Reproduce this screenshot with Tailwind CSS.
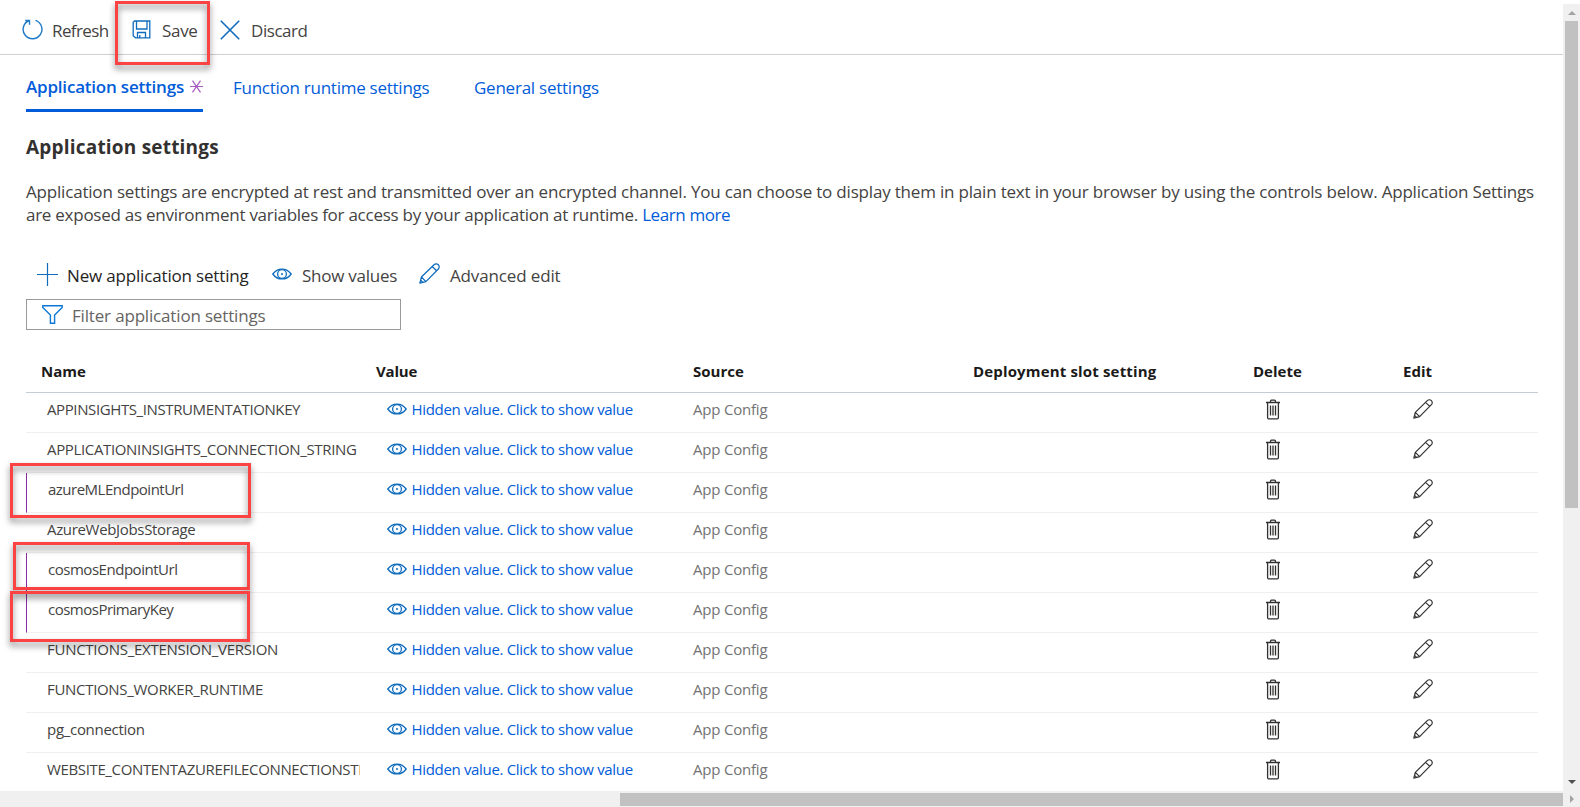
<!DOCTYPE html>
<html lang="en">
<head>
<meta charset="utf-8">
<title>Application settings</title>
<script src="https://cdn.jsdelivr.net/npm/@tailwindcss/browser@4"></script>
</head>
<body class="w-[1580px] h-[807px] overflow-hidden bg-white font-['Open_Sans','Noto_Sans',sans-serif] text-[17px] text-[#444342] tracking-[-0.2px] whitespace-nowrap">

<svg class="hidden">
  <symbol id="eye" viewBox="0 0 20 12" fill="none" stroke="currentColor" stroke-width="1.3">
    <path d="M.8 6C5.5-.6 14.500-.6 19.200 6 14.500 12.600 5.500 12.600.800 6Z"/>
    <circle cx="10" cy="6" r="4.400"/><circle cx="10" cy="6" r="1" fill="currentColor" stroke="none"/>
  </symbol>
  <symbol id="pencil" viewBox="0 0 20 20" fill="none" stroke="currentColor" stroke-width="1.200" stroke-linejoin="round">
    <path d="M.8 19.200 2.300 13.400 14.300 1.600a2.800 2.800 0 0 1 4.100 4.100L6.600 17.700ZM2.300 13.400l4.300 4.300M12.600 3.300l4.100 4.100M1.600 16.400l2 2"/>
  </symbol>
  <symbol id="trash" viewBox="0 0 16 21" fill="none" stroke="currentColor" stroke-width="1.300">
    <path d="M1 3.500h14M5.500 3.500V2.200a1 1 0 0 1 1-1h3a1 1 0 0 1 1 1v1.300M2.600 3.500v15.300a1 1 0 0 0 1 1h8.800a1 1 0 0 0 1-1V3.500"/>
    <path d="M5.500 6.500v10M8 6.500v10M10.500 6.500v10"/>
  </symbol>
</svg>

<div class="flex h-[791px]">
  <main class="w-[1563px] h-[791px] overflow-hidden">
    <header class="flex items-center h-[55px] border-b border-[#d0d0d0] pl-[22px] pt-[8px] tracking-[-0.6px]">
      <svg class="w-[21px] h-[21px] mt-[-3px] text-[#1f7ac8]" viewBox="0 0 21 21" fill="none" stroke="currentColor" stroke-width="1.400"><path d="M13.500 1.400A9.400 9.400 0 1 1 7.300 1.500M3.200 1.500h4.300v4.300"/></svg>
      <span class="ml-[9px] w-[80px]">Refresh</span>
      <svg class="w-[19px] h-[19px] mt-[-3px] text-[#0f6cbd]" viewBox="0 0 19 19" fill="none" stroke="currentColor" stroke-width="1.300"><path d="M2.500 1h15.300v16.800H3.500L1.200 15.700V2.200ZM4.500 1v8h10.500V1M5.500 17.800v-5.300h8v5.300M7.800 15v2.800"/></svg>
      <span class="ml-[11px] w-[58px] tracking-[-0.3px]">Save</span>
      <svg class="w-[20px] h-[20px] mt-[-3px] text-[#0f6cbd]" viewBox="0 0 20 20" fill="none" stroke="currentColor" stroke-width="1.600"><path d="M.8.800l18.400 18.400M19.200.800.800 19.200"/></svg>
      <span class="ml-[11px] tracking-[-0.45px]">Discard</span>
    </header>

    <nav class="flex h-[57px] ml-[26px] text-[#015cda]">
      <div class="flex w-[177px] h-[57px] border-b-[3px] border-[#015cda] items-center pt-[9px] font-semibold tracking-[-0.2px]">Application settings
        <svg class="w-[13px] h-[13px] ml-auto text-[#a85cc0]" viewBox="0 0 13 13" stroke="currentColor" stroke-width="1.200"><path d="M0 6.500h13M2.500.6l8 11.800M10.500.6l-8 11.800"/></svg>
      </div>
      <div class="ml-[30px] pt-[21px] w-[241px] leading-6 tracking-[-0.26px]">Function runtime settings</div>
      <div class="pt-[21px] leading-6 tracking-[-0.24px]">General settings</div>
    </nav>

    <section class="pl-[26px]">
      <h1 class="mt-[22px] h-[26px] leading-[26px] text-[19px] font-bold tracking-[0.2px] text-[#323130]">Application settings</h1>
      <p class="mt-[20px] leading-[23px] tracking-[-0.189px]">Application settings are encrypted at rest and transmitted over an encrypted channel. You can choose to display them in plain text in your browser by using the controls below. Application Settings<br><span class="tracking-[-0.26px]">are exposed as environment variables for access by your application at runtime. <a class="text-[#015cda] tracking-[-0.4px]">Learn more</a></span></p>

      <div class="flex items-center mt-[36px] h-[28px] pl-[11px]">
        <svg class="w-[21px] h-[23px] mt-[-3px] text-[#0f6cbd]" viewBox="0 0 21 23" stroke="currentColor" stroke-width="1.200"><path d="M0 11.500h21M10.500 0v23"/></svg>
        <span class="ml-[9px] w-[205px] tracking-[-0.17px] text-[#252423]">New application setting</span>
        <svg class="w-[20px] h-[12px] mt-[-4px] text-[#0f6cbd]"><use href="#eye"/></svg>
        <span class="ml-[10px] w-[117px] tracking-[-0.26px]">Show values</span>
        <svg class="w-[21px] h-[23px] mt-[-5px] text-[#0f6cbd]"><use href="#pencil"/></svg>
        <span class="ml-[10px] tracking-[-0.14px]">Advanced edit</span>
      </div>
      <div class="flex items-center mt-[9px] w-[375px] h-[31px] border border-[#9a9a9a] pl-[15px] text-[#666462]">
        <svg class="w-[21px] h-[19px] text-[#0f78d4]" viewBox="0 0 21 19" fill="none" stroke="currentColor" stroke-width="1.400"><path d="M.8.800h19.400v1.600L12.600 10v8.200H8.400V10L.8 2.400Z"/></svg>
        <span class="ml-[9px] pt-[2px] tracking-[-0.17px]">Filter application settings</span>
      </div>

      <div class="w-[1512px] mt-[21px] text-[15px]">
        <div class="grid grid-cols-[335px_317px_280px_280px_150px_150px] items-center h-[42px] border-b border-[#c3ccd6] pl-[15px] font-bold tracking-normal text-[#1b1a19]">
          <span>Name</span><span class="tracking-[-0.2px]">Value</span><span>Source</span><span class="tracking-[0.16px]">Deployment slot setting</span><span>Delete</span><span>Edit</span>
        </div>
        <div id="rows"></div>
      </div>
    </section>
  </main>

  <aside class="flex flex-col items-center w-[17px] h-[787px] mt-1 bg-[#f0f0f0]">
    <svg class="w-[8px] h-[4px] mt-[7px] mb-[6px] text-[#a3a3a3]" viewBox="0 0 8 4"><path d="M0 4 4 0l4 4Z" fill="currentColor"/></svg>
    <div class="w-[13px] h-[487px] bg-[#c1c1c1]"></div>
    <svg class="w-[8px] h-[4px] mt-auto mb-[7px] text-[#505050]" viewBox="0 0 8 4"><path d="M0 0h8L4 4Z" fill="currentColor"/></svg>
  </aside>
</div>
<footer class="flex items-center h-[16px] bg-[#f0f0f0] pl-[620px]">
  <div class="w-[943px] h-[13px] mt-px bg-[#c1c1c1]"></div>
  <svg class="w-[4px] h-[8px] ml-[7px] text-[#a3a3a3]" viewBox="0 0 4 8"><path d="M0 0v8l4-4Z" fill="currentColor"/></svg>
</footer>

<!-- highlight callouts -->
<div class="absolute left-[115px] top-[1px] w-[95px] h-[64px] border-3 border-[#fb4343] drop-shadow-[0_4px_3px_rgba(0,0,0,0.5)]"></div>
<div class="absolute left-[10px] top-[463px] w-[241px] h-[55px] border-3 border-[#fb4343] drop-shadow-[0_4px_3px_rgba(0,0,0,0.5)]"></div>
<div class="absolute left-[13px] top-[542px] w-[237px] h-[48px] border-3 border-[#fb4343] drop-shadow-[0_4px_3px_rgba(0,0,0,0.5)]"></div>
<div class="absolute left-[10px] top-[591px] w-[240px] h-[51px] border-3 border-[#fb4343] drop-shadow-[0_4px_3px_rgba(0,0,0,0.5)]"></div>

<script>
const rows = [
  ["APPINSIGHTS_INSTRUMENTATIONKEY", "tracking-[-0.39px]"],
  ["APPLICATIONINSIGHTS_CONNECTION_STRING", "tracking-[-0.35px]"],
  ["azureMLEndpointUrl", "tracking-[-0.5px]", 1],
  ["AzureWebJobsStorage", "tracking-[-0.33px]"],
  ["cosmosEndpointUrl", "tracking-[-0.47px]", 1],
  ["cosmosPrimaryKey", "tracking-[-0.5px]", 1],
  ["FUNCTIONS_EXTENSION_VERSION", "tracking-[-0.27px]"],
  ["FUNCTIONS_WORKER_RUNTIME", "tracking-[-0.31px]"],
  ["pg_connection", "tracking-[-0.3px]"],
  ["WEBSITE_CONTENTAZUREFILECONNECTIONSTRING", "tracking-[-0.36px]"]
];
document.getElementById("rows").innerHTML = rows.map(([name, spacing, changed]) => `
<div class="grid grid-cols-[335px_317px_280px_299px_150px_100px] items-center h-[40px] border-b border-[#f0f0f0] pb-[6px] ${changed ? "pl-[14px] border-l border-l-[#8a2da5]" : "pl-[15px]"}">
  <span class="${changed ? "ml-[7px]" : "ml-[6px]"} w-[313px] overflow-hidden ${spacing}">${name}</span>
  <span class="flex items-center pl-[11px] text-[#015cda] tracking-[-0.33px]"><svg class="w-[20px] h-[12px] mt-[-1px] mr-[4.500px] text-[#0f6cbd]"><use href="#eye"/></svg>Hidden value. Click to show value</span>
  <span class="text-[#737373]">App Config</span><span></span>
  <svg class="w-[16px] h-[21px] ml-[-7.500px] text-[#323130]"><use href="#trash"/></svg>
  <svg class="w-[20px] h-[20px] ml-[-9px] mt-[-2px] text-[#323130]"><use href="#pencil"/></svg>
</div>`).join("");
</script>
</body>
</html>
